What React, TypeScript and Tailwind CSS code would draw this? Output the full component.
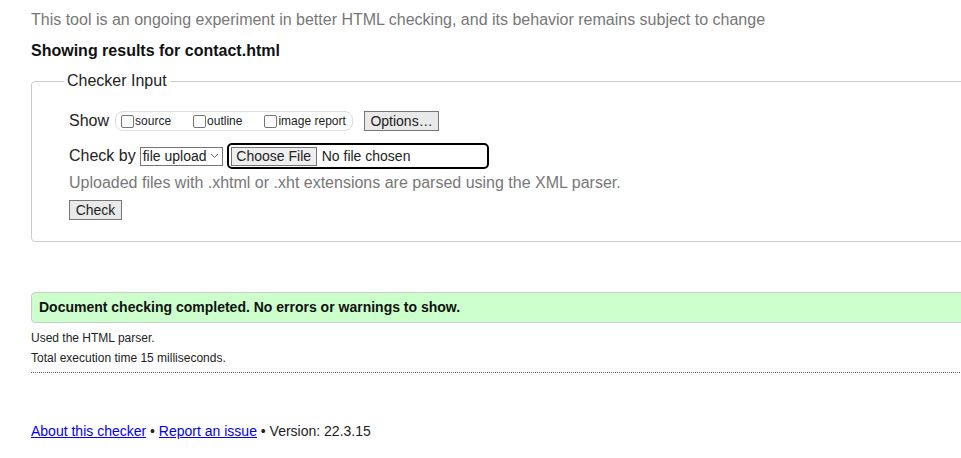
export default function App() {
  return (
    <div className="w-full h-[458px] overflow-hidden bg-white font-['Liberation_Sans',Arial,sans-serif] text-[#222]">
      <div className="w-[1000px] pl-[31px]">
        <p className="pt-[11px] text-[16px] leading-[18px] text-[#777]">
          This tool is an ongoing experiment in better HTML checking, and its behavior remains subject to change
        </p>

        <h2 className="mt-[13px] text-[16px] leading-[18px] font-bold text-[#111]">
          Showing results for contact.html
        </h2>

        <fieldset className="mt-[12px] h-[170px] rounded-[4px] border border-[#ccc] pl-[32px]">
          <legend className="px-[3px] text-[16px] leading-[18px] text-[#222]">Checker Input</legend>

          <div className="pl-[5px] pt-[21px]">
            <div className="flex h-[20px] items-center">
              <span className="text-[16px] leading-[18px]">Show</span>
              <div className="ml-[6px] flex h-[20px] w-[238px] items-center rounded-[8px] border border-[#ddd] pl-[5px] text-[12px]">
                <span className="h-[13px] w-[13px] rounded-[2px] border border-[#767676] bg-white" />
                <span className="ml-px">source</span>
                <span className="ml-[22px] h-[13px] w-[13px] rounded-[2px] border border-[#767676] bg-white" />
                <span className="ml-px">outline</span>
                <span className="ml-[22px] h-[13px] w-[13px] rounded-[2px] border border-[#767676] bg-white" />
                <span className="ml-px">image report</span>
              </div>
              <button className="ml-[11px] h-[20px] w-[75px] border border-[#767676] bg-[#e9e9e9] text-[14px] leading-[18px]">
                Options…
              </button>
            </div>

            <div className="mt-[12px] flex h-[26px] items-center">
              <span className="text-[16px] leading-[18px]">Check by</span>
              <div className="ml-[4px] flex h-[19px] w-[83px] items-center border border-[#767676] pl-[2px] text-[14px]">
                <span>file upload</span>
                <svg className="ml-[3px]" width="9" height="6" viewBox="0 0 9 6">
                  <path d="M1 1l3.5 3.5L8 1" fill="none" stroke="#666" strokeWidth="1" />
                </svg>
              </div>
              <div className="ml-[4px] flex h-[26px] w-[262px] items-center rounded-[5px] border-2 border-black pl-[2px] text-[14px]">
                <button className="h-[19px] w-[86px] border border-[#767676] bg-[#efefef] leading-[17px]">Choose File</button>
                <span className="ml-[5px]">No file chosen</span>
              </div>
            </div>

            <p className="mt-[5px] text-[16px] leading-[18px] text-[#777]">
              Uploaded files with .xhtml or .xht extensions are parsed using the XML parser.
            </p>

            <button className="mt-[8px] h-[20px] w-[53px] border border-[#767676] bg-[#e9e9e9] text-[14px] leading-[18px]">
              Check
            </button>
          </div>
        </fieldset>

        <div className="mt-[50px] flex h-[31px] items-center rounded-l-[4px] border border-[#ccc] bg-[#ccffcc] pl-[7px] text-[14px] font-bold text-[#111]">
          Document checking completed. No errors or warnings to show.
        </div>

        <p className="mt-[8px] text-[12px] leading-[14px]">Used the HTML parser.</p>
        <p className="mt-[6px] text-[12px] leading-[14px]">Total execution time 15 milliseconds.</p>
        <div className="mt-[7px] border-t border-dotted border-[#666]" />

        <p className="mt-[50px] text-[14px] leading-[16px] text-[#222]">
          <a href="#" className="text-[#0000ee] underline">About this checker</a>
          {" • "}
          <a href="#" className="text-[#0000ee] underline">Report an issue</a>
          {" • Version: 22.3.15"}
        </p>
      </div>
    </div>
  );
}
